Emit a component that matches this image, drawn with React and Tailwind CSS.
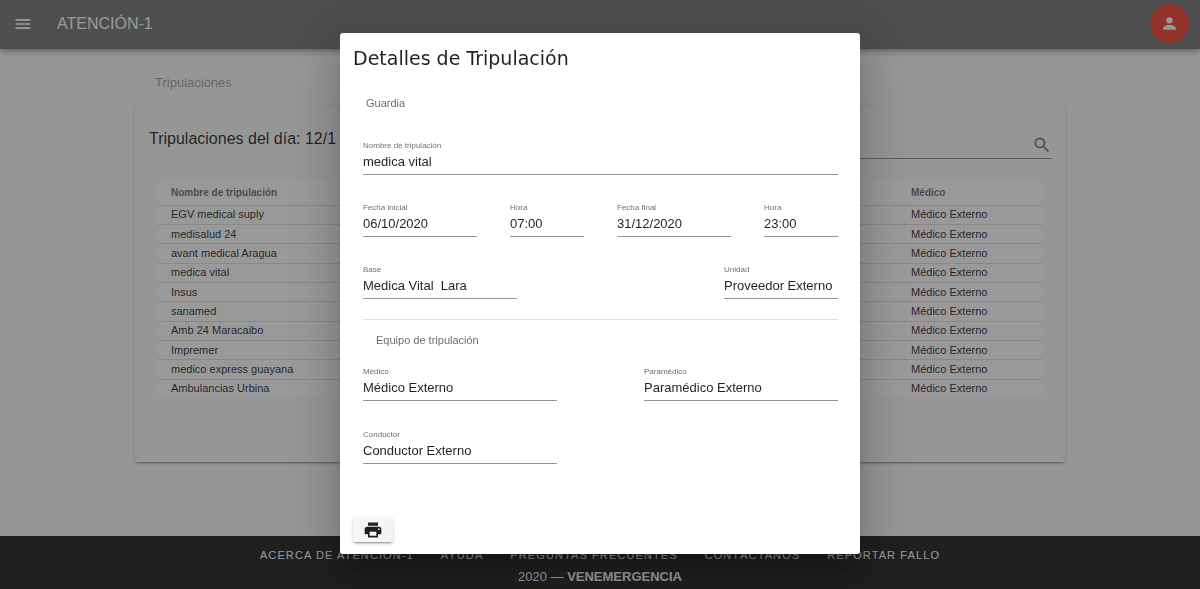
import React from "react";

const ICONS = {
  menu: "M3,6H21V8H3V6M3,11H21V13H3V11M3,16H21V18H3V16Z",
  account:
    "M12,4A4,4 0 0,1 16,8A4,4 0 0,1 12,12A4,4 0 0,1 8,8A4,4 0 0,1 12,4M12,14C16.42,14 20,15.79 20,18V20H4V18C4,15.79 7.58,14 12,14Z",
  magnify:
    "M9.5,3A6.5,6.5 0 0,1 16,9.5C16,11.11 15.41,12.59 14.44,13.73L14.71,14H15.5L20.5,19L19,20.5L14,15.5V14.71L13.73,14.44C12.59,15.41 11.11,16 9.5,16A6.5,6.5 0 0,1 3,9.5A6.5,6.5 0 0,1 9.5,3M9.5,5C7,5 5,7 5,9.5C5,12 7,14 9.5,14C12,14 14,12 14,9.5C14,7 12,5 9.5,5Z",
  printer:
    "M18,3H6V7H18M19,12A1,1 0 0,1 18,11A1,1 0 0,1 19,10A1,1 0 0,1 20,11A1,1 0 0,1 19,12M16,19H8V14H16M19,8H5A3,3 0 0,0 2,11V17H6V21H18V17H22V11A3,3 0 0,0 19,8Z",
};

function Icon({ name, className }) {
  return (
    <svg viewBox="0 0 24 24" fill="currentColor" aria-hidden="true" className={className}>
      <path d={ICONS[name]} />
    </svg>
  );
}

const crews = [
  "EGV medical suply",
  "medisalud 24",
  "avant medical Aragua",
  "medica vital",
  "Insus",
  "sanamed",
  "Amb 24 Maracaibo",
  "Impremer",
  "medico express guayana",
  "Ambulancias Urbina",
];

const links = ["Acerca de Atención-1", "Ayuda", "Preguntas frecuentes", "Contáctanos", "Reportar fallo"];

function Field({ id, label, value, className }) {
  return (
    <div className={`flex min-w-0 flex-col ${className}`}>
      <label htmlFor={id} className="text-[8px] leading-[11px] text-black/60">
        {label}
      </label>
      <input
        id={id}
        type="text"
        readOnly
        defaultValue={value}
        className="h-6 w-full border-b border-[#949494] bg-transparent pb-[2px] text-[13px] text-black/87 outline-none"
      />
    </div>
  );
}

function Header() {
  return (
    <header className="z-10 flex h-[49px] items-center bg-[#757575] pr-[11px] pb-[2px] pl-[13px] text-white shadow-[0_2px_4px_-1px_rgba(0,0,0,0.2),0_4px_5px_rgba(0,0,0,0.14),0_1px_10px_rgba(0,0,0,0.12)]">
      <button type="button" aria-label="Menú">
        <Icon name="menu" className="size-5" />
      </button>
      <span className="ml-6 text-base">ATENCIÓN-1</span>
      <button
        type="button"
        aria-label="Cuenta"
        className="ml-auto flex size-[39px] items-center justify-center rounded-full bg-[#f44336]"
      >
        <Icon name="account" className="size-[19px]" />
      </button>
    </header>
  );
}

function CrewList() {
  return (
    <main className="flex-1 px-6">
      <div className="mx-auto max-w-[930px]">
        <p className="px-5 pt-6 pb-[14px] text-[13px] leading-5 text-black/38">Tripulaciones</p>
        <section className="h-[355px] rounded-[3px] bg-[#fafafa] pr-[13px] pl-[14px] shadow-[0_3px_1px_-2px_rgba(0,0,0,0.2),0_2px_2px_rgba(0,0,0,0.14),0_1px_5px_rgba(0,0,0,0.12)]">
          <div className="flex items-start justify-between">
            <h1 className="pt-5 text-base text-black/87">Tripulaciones del día: 12/1</h1>
            <div className="mt-6 flex h-7 w-96 items-center border-b border-black/42">
              <input type="search" aria-label="Buscar" className="min-w-0 flex-1 bg-transparent text-[13px] outline-none" />
              <Icon name="magnify" className="size-5 text-black/54" />
            </div>
          </div>
          <div className="pt-[22px] pr-[10px] pl-[9px]">
            <table className="h-[217px] w-full table-fixed border-collapse bg-white text-left text-[11px] leading-[14px] text-black/87">
              <thead>
                <tr className="h-6 text-[10px] text-black/60">
                  <th className="px-[13px] font-bold">Nombre de tripulación</th>
                  <th className="w-36 px-[13px] font-bold">Médico</th>
                </tr>
              </thead>
              <tbody>
                {crews.map((name) => (
                  <tr key={name} className="border-t border-black/12">
                    <td className="px-[13px] pb-px">{name}</td>
                    <td className="px-[13px] pb-px">Médico Externo</td>
                  </tr>
                ))}
              </tbody>
            </table>
          </div>
        </section>
      </div>
    </main>
  );
}

function Footer() {
  return (
    <footer className="flex h-[53px] flex-col items-center bg-[#212121] pt-[11px] text-white">
      <nav className="flex gap-[27px] text-[11px] leading-4 font-normal tracking-widest uppercase">
        {links.map((text) => (
          <a key={text} href="#">
            {text}
          </a>
        ))}
      </nav>
      <p className="mt-1 text-[13px] leading-5">
        2020 — <strong>VENEMERGENCIA</strong>
      </p>
    </footer>
  );
}

function CrewDialog() {
  return (
    <div className="fixed inset-0 z-20 flex items-center justify-center bg-[rgba(33,33,33,0.46)] pb-[2px]">
      <div
        role="dialog"
        aria-modal="true"
        aria-labelledby="dialog-title"
        className="w-full max-w-[520px] rounded-[3px] bg-white px-[13px] pt-[13px] pb-3 text-black/87 shadow-[0_11px_15px_-7px_rgba(0,0,0,0.2),0_24px_38px_3px_rgba(0,0,0,0.14),0_9px_46px_8px_rgba(0,0,0,0.12)]"
      >
        <h2 id="dialog-title" className="font-['DejaVu_Sans',sans-serif] text-[19px] leading-6">
          Detalles de Tripulación
        </h2>
        <div className="pt-[25px] pr-[9px] pl-[10px]">
          <p className="px-[3px] text-[11px] leading-4 text-black/60">Guardia</p>
          <div className="mt-[29px] flex flex-col gap-[27px]">
            <Field id="crew" label="Nombre de tripulación" value="medica vital" className="w-full" />
            <div className="flex justify-between">
              <Field id="start-date" label="Fecha inicial" value="06/10/2020" className="w-[114px]" />
              <Field id="start-time" label="Hora" value="07:00" className="w-[74px]" />
              <Field id="end-date" label="Fecha final" value="31/12/2020" className="w-[114px]" />
              <Field id="end-time" label="Hora" value="23:00" className="w-[74px]" />
            </div>
            <div className="flex justify-between">
              <Field id="base" label="Base" value="Medica Vital  Lara" className="w-[154px]" />
              <Field id="unit" label="Unidad" value="Proveedor Externo" className="w-[114px]" />
            </div>
          </div>
          <hr className="mt-5 border-black/12" />
          <p className="mt-3 px-[13px] text-[11px] leading-4 text-black/60">Equipo de tripulación</p>
          <div className="mt-[18px] flex flex-col gap-7">
            <div className="flex justify-between">
              <Field id="doctor" label="Médico" value="Médico Externo" className="w-[194px]" />
              <Field id="paramedic" label="Paramédico" value="Paramédico Externo" className="w-[194px]" />
            </div>
            <Field id="driver" label="Conductor" value="Conductor Externo" className="w-[194px]" />
          </div>
        </div>
        <button
          type="button"
          aria-label="Imprimir"
          className="mt-[54px] flex h-6 w-10 items-center justify-center rounded-[3px] bg-[#f5f5f5] shadow-[0_3px_1px_-2px_rgba(0,0,0,0.2),0_2px_2px_rgba(0,0,0,0.14),0_1px_5px_rgba(0,0,0,0.12)]"
        >
          <Icon name="printer" className="size-5" />
        </button>
      </div>
    </div>
  );
}

export default function App() {
  return (
    <div className="flex min-h-screen flex-col bg-[#fafafa] font-['Liberation_Sans',Arial,sans-serif]">
      <Header />
      <CrewList />
      <Footer />
      <CrewDialog />
    </div>
  );
}
